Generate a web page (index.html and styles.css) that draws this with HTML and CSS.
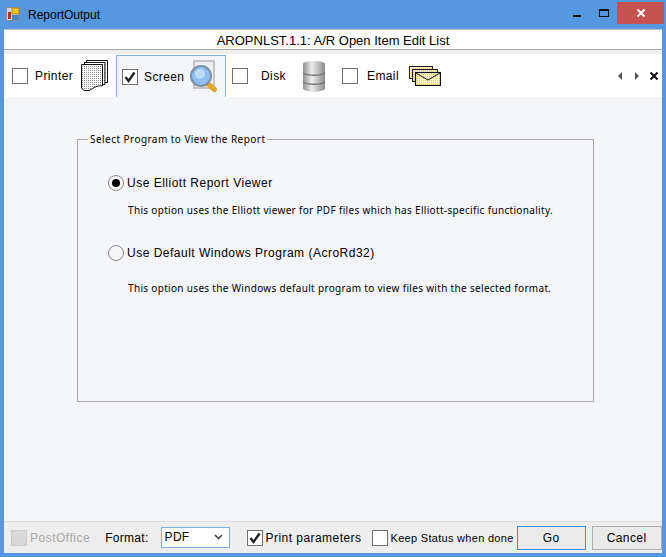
FILE: index.html
```html
<!DOCTYPE html>
<html lang="en">
<head>
    <meta charset="UTF-8">
    <title>ReportOutput</title>
    <link rel="stylesheet" href="styles.css">
</head>
<body>
    <div class="window">
        <div class="titlebar">
            <svg class="app-icon" width="15" height="15" viewBox="0 0 15 15">
                <rect x="0.5" y="0.5" width="13" height="13" fill="#c9d6e6" stroke="#8a8f99"/>
                <rect x="6" y="1" width="7" height="6" fill="#f5c518" stroke="#a87c10" stroke-width="0.8"/>
                <rect x="2" y="5" width="3" height="7" fill="#c8281e"/>
                <rect x="6" y="8" width="7" height="5" fill="#4f86c6"/>
            </svg>
            <span class="title-text">ReportOutput</span>
            <div class="window-btns">
                <span class="btn-min"></span>
                <span class="btn-max"></span>
                <span class="btn-close">
                    <svg width="10" height="10" viewBox="0 0 10 10"><path d="M1.5 1.5L8.5 8.5M8.5 1.5L1.5 8.5" stroke="#fff" stroke-width="2"/></svg>
                </span>
            </div>
        </div>

        <div class="client">
            <div class="report-name">AROPNLST.1.1: A/R Open Item Edit List</div>

            <div class="tabstrip">
                <div class="tab tab-printer">
                    <span class="check"></span>
                    <span class="tab-label">Printer</span>
                    <svg class="tab-icon" width="29" height="32" viewBox="0 0 29 32">
                        <defs>
                            <pattern id="dots" width="2" height="2" patternUnits="userSpaceOnUse">
                                <rect width="2" height="2" fill="#fff"/>
                                <rect width="1" height="1" fill="#8c8c8c"/>
                            </pattern>
                            <pattern id="maildots" width="2" height="2" patternUnits="userSpaceOnUse">
                                <rect width="2" height="2" fill="#fdf9c0"/>
                                <rect width="1" height="1" fill="#e6d400"/>
                            </pattern>
                        </defs>
                        <path d="M6.5 3V0.5H27.5V22.5H24" fill="#fff" stroke="#111"/>
                        <path d="M4.5 5V2.5H25V24.5H23" fill="url(#dots)" stroke="#111"/>
                        <path d="M1.5 4.5H22.5V26C17 25 14 28 9 30.5H4L1.5 28Z" fill="url(#dots)" stroke="#111"/>
                    </svg>
                </div>
                <div class="tab tab-active">
                    <span class="check">
                        <svg width="14" height="14" viewBox="0 0 14 14"><path d="M2.5 7L5.5 11L11.5 2.5" fill="none" stroke="#222" stroke-width="2.4"/></svg>
                    </span>
                    <span class="tab-label">Screen</span>
                    <svg class="tab-icon" width="28" height="33" viewBox="0 0 28 33">
                        <rect x="4" y="1" width="20" height="27" fill="#eceef0" stroke="#c4c4c4" stroke-width="2"/>
                        <path d="M17 23L24.5 29.5" stroke="#e2a52a" stroke-width="5" stroke-linecap="round"/>
                        <circle cx="11" cy="16" r="10" fill="#8fc0f2" stroke="#7d8fa3" stroke-width="2"/>
                        <circle cx="10" cy="14" r="5" fill="#bcdcfa"/>
                    </svg>
                </div>
                <div class="tab tab-disk">
                    <span class="check"></span>
                    <span class="tab-label">Disk</span>
                    <svg class="tab-icon" width="24" height="33" viewBox="0 0 24 33">
                        <defs>
                            <linearGradient id="can" x1="0" x2="1" y1="0" y2="0">
                                <stop offset="0" stop-color="#8f8f8f"/>
                                <stop offset="0.4" stop-color="#eeeeee"/>
                                <stop offset="1" stop-color="#8a8a8a"/>
                            </linearGradient>
                        </defs>
                        <path d="M1 4C1 0 23 0 23 4V28C23 33 1 33 1 28Z" fill="url(#can)"/>
                        <path d="M1 13C5 16 19 16 23 13M1 22C5 25 19 25 23 22" fill="none" stroke="#777" stroke-width="1.5"/>
                    </svg>
                </div>
                <div class="tab tab-email">
                    <span class="check"></span>
                    <span class="tab-label">Email</span>
                    <svg class="tab-icon" width="32" height="20" viewBox="0 0 32 20">
                        <rect x="0.5" y="0.5" width="23" height="12" fill="url(#maildots)" stroke="#222"/>
                        <rect x="3.5" y="3.5" width="25" height="12" fill="url(#maildots)" stroke="#222"/>
                        <rect x="6.5" y="6.5" width="25" height="13" fill="url(#maildots)" stroke="#111" stroke-width="1.2"/>
                        <path d="M7 7L19 14L31 7" fill="none" stroke="#111"/>
                    </svg>
                </div>
                <div class="tab-nav">
                    <svg width="44" height="10" viewBox="0 0 44 10">
                        <path d="M6 1V9L2 5Z" fill="#555"/>
                        <path d="M19 1V9L23 5Z" fill="#555"/>
                        <path d="M34.5 1.5L41.5 8.5M41.5 1.5L34.5 8.5" stroke="#111" stroke-width="2"/>
                    </svg>
                </div>
            </div>

            <div class="content">
                <fieldset class="group">
                    <legend>Select Program to View the Report</legend>
                    <div class="options">
                        <div class="option">
                            <span class="radio radio-on"></span>
                            <span class="option-label">Use Elliott Report Viewer</span>
                        </div>
                        <p class="option-note">This option uses the Elliott viewer for PDF files which has Elliott-specific functionality.</p>
                        <div class="option">
                            <span class="radio"></span>
                            <span class="option-label">Use Default Windows Program (AcroRd32)</span>
                        </div>
                        <p class="option-note option-note-wide">This option uses the Windows default program to view files with the selected format.</p>
                    </div>
                </fieldset>
            </div>

            <div class="footer">
                <span class="check check-disabled"></span>
                <span class="postoffice">PostOffice</span>
                <span class="format-label">Format:</span>
                <div class="format-select">
                    <span>PDF</span>
                    <svg width="9" height="6" viewBox="0 0 9 6"><path d="M1 1L4.5 4.5L8 1" fill="none" stroke="#444" stroke-width="1.6"/></svg>
                </div>
                <span class="check check-params">
                    <svg width="14" height="14" viewBox="0 0 14 14"><path d="M2.5 7L5.5 11L11.5 2.5" fill="none" stroke="#222" stroke-width="2.4"/></svg>
                </span>
                <span class="params-label">Print parameters</span>
                <span class="check check-keep"></span>
                <span class="keep-label">Keep Status when done</span>
                <button class="btn btn-go">Go</button>
                <button class="btn btn-cancel">Cancel</button>
            </div>
        </div>
    </div>
</body>
</html>
```

FILE: styles.css
```css
* {
    box-sizing: border-box;
    margin: 0;
    padding: 0;
}

html, body {
    width: 666px;
    height: 557px;
    overflow: hidden;
}

body {
    font-family: 'Liberation Sans', Arial, sans-serif;
    font-size: 12px;
    color: #000;
    background: #5598e0;
}

.window {
    height: 557px;
    display: flex;
    flex-direction: column;
    background: #5598e0;
    padding: 0 4px 4px 4px;
}

.titlebar {
    height: 29px;
    display: flex;
    align-items: center;
    flex: none;
    margin-right: -4px;
}

.app-icon {
    margin: 0 7px 1px 2px;
}

.title-text {
    font-size: 12px;
}

.window-btns {
    margin-left: auto;
    display: flex;
    align-items: flex-start;
    align-self: flex-start;
    padding-right: 2px;
}

.btn-min {
    width: 8px;
    height: 2px;
    background: #111;
    margin: 15px 18px 0 0;
}

.btn-max {
    width: 10px;
    height: 8px;
    border: 1px solid #111;
    border-top-width: 2px;
    margin: 9px 8px 0 0;
}

.btn-close {
    width: 47px;
    height: 22px;
    margin-top: 2px;
    background: #c75050;
    display: flex;
    align-items: center;
    justify-content: center;
}

.client {
    flex: 1;
    display: flex;
    flex-direction: column;
    background: #f4f5f8;
    min-height: 0;
}

.report-name {
    height: 21px;
    flex: none;
    background: #fff;
    border-top: 1px solid #bdbdbd;
    border-bottom: 1px solid #a9a9a9;
    text-align: center;
    font-size: 13px;
    line-height: 21px;
}

.tabstrip {
    height: 47px;
    flex: none;
    display: flex;
    align-items: flex-end;
    background: #fff;
    border-top: 4px solid #eeeeee;
}

.tab {
    height: 42px;
    display: flex;
    align-items: center;
}

.tab-printer {
    width: 112px;
    padding-left: 8px;
}

.tab-active {
    width: 110px;
    padding-left: 5px;
    background: #f4f5f8;
    border: 1px solid #7fb0e0;
    border-bottom: none;
}

.tab-disk {
    width: 110px;
    padding-left: 6px;
}

.tab-email {
    width: 110px;
    padding-left: 6px;
}

.check {
    width: 16px;
    height: 16px;
    border: 1px solid #707070;
    background: #fff;
    display: flex;
    align-items: center;
    justify-content: center;
    flex: none;
}

.tab-label {
    font-size: 12px;
    letter-spacing: 0.4px;
    margin-left: 7px;
}

.tab-printer .tab-icon {
    margin-left: 7px;
}

.tab-active .tab-icon {
    margin-left: 6px;
}

.tab-active .tab-label {
    margin-left: 6px;
}

.tab-disk .tab-label {
    margin-left: 13px;
}

.tab-disk .tab-icon {
    margin-left: 16px;
}

.tab-email .tab-label {
    margin-left: 9px;
}

.tab-email .tab-icon {
    margin-left: 10px;
}

.tab-nav {
    margin-left: auto;
    height: 42px;
    display: flex;
    align-items: center;
    padding-right: 2px;
}

.content {
    flex: 1;
    padding: 35px 68px 0 73px;
    border-bottom: 1px solid #dcdcdc;
}

.group {
    height: 270px;
    border: 1px solid #a9a9a9;
}

.group legend {
    margin-left: 10px;
    padding: 0 2px;
    font-family: 'Noto Sans', sans-serif;
    font-size: 10px;
    letter-spacing: 0.45px;
    line-height: 14px;
}

.options {
    padding: 28px 0 0 30px;
}

.option {
    display: flex;
    align-items: center;
    height: 18px;
}

.radio {
    width: 16px;
    height: 16px;
    border-radius: 50%;
    border: 1px solid #8a8a8a;
    background: #f5f5f5;
    display: flex;
    align-items: center;
    justify-content: center;
    flex: none;
}

.radio-on::after {
    content: "";
    width: 8px;
    height: 8px;
    border-radius: 50%;
    background: #000;
}

.option-label {
    margin-left: 3px;
    font-size: 12px;
    letter-spacing: 0.5px;
}

.option-note {
    margin: 11px 0 27px 20px;
    font-family: 'Noto Sans', sans-serif;
    font-size: 10px;
    letter-spacing: 0.32px;
    line-height: 14px;
}

.option-note-wide {
    margin-top: 19px;
}

.footer {
    height: 31px;
    flex: none;
    display: flex;
    align-items: center;
    background: #eeeeee;
    padding-left: 7px;
}

.check-disabled {
    background: #d8d8d8;
    border-color: #cccccc;
}

.postoffice {
    color: #a8a8a8;
    margin-left: 3px;
    letter-spacing: 0.5px;
}

.format-label {
    margin-left: 15px;
    letter-spacing: 0.3px;
}

.format-select {
    width: 69px;
    height: 21px;
    margin-left: 12px;
    border: 1px solid #7fb0e0;
    background: #fff;
    display: flex;
    align-items: center;
    justify-content: space-between;
    padding: 0 6px 2px 3px;
    letter-spacing: 0.3px;
}

.check-params {
    margin-left: 17px;
}

.params-label {
    margin-left: 3px;
    letter-spacing: 0.45px;
}

.check-keep {
    margin-left: 10px;
}

.keep-label {
    margin-left: 3px;
    font-size: 11px;
    letter-spacing: 0.3px;
}

.btn {
    height: 24px;
    background: #eaeaea;
    font: inherit;
    letter-spacing: 0.4px;
    color: #000;
}

.btn-go {
    width: 69px;
    margin-left: 3px;
    border: 1px solid #3c8fe8;
}

.btn-cancel {
    width: 70px;
    margin-left: 6px;
    border: 1px solid #adadad;
}
```
